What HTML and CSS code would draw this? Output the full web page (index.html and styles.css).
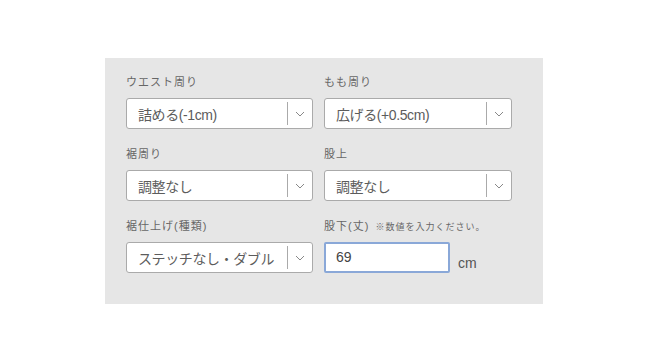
FILE: index.html
```html
<!DOCTYPE html>
<html lang="ja">
<head>
    <meta charset="UTF-8">
    <title>サイズ調整</title>
    <link rel="stylesheet" href="styles.css">
</head>
<body>
    <div class="panel">
        <div class="field">
            <label class="label">ウエスト周り</label>
            <div class="select">
                <span class="value">詰める(-1cm)</span>
                <span class="arrow"><svg width="10" height="6" viewBox="0 0 10 6"><path d="M1 1l4 4 4-4" fill="none" stroke="#888" stroke-width="1"/></svg></span>
            </div>
        </div>
        <div class="field">
            <label class="label">もも周り</label>
            <div class="select">
                <span class="value">広げる(+0.5cm)</span>
                <span class="arrow"><svg width="10" height="6" viewBox="0 0 10 6"><path d="M1 1l4 4 4-4" fill="none" stroke="#888" stroke-width="1"/></svg></span>
            </div>
        </div>
        <div class="field">
            <label class="label">裾周り</label>
            <div class="select">
                <span class="value">調整なし</span>
                <span class="arrow"><svg width="10" height="6" viewBox="0 0 10 6"><path d="M1 1l4 4 4-4" fill="none" stroke="#888" stroke-width="1"/></svg></span>
            </div>
        </div>
        <div class="field">
            <label class="label">股上</label>
            <div class="select">
                <span class="value">調整なし</span>
                <span class="arrow"><svg width="10" height="6" viewBox="0 0 10 6"><path d="M1 1l4 4 4-4" fill="none" stroke="#888" stroke-width="1"/></svg></span>
            </div>
        </div>
        <div class="field">
            <label class="label">裾仕上げ(種類)</label>
            <div class="select">
                <span class="value">ステッチなし・ダブル</span>
                <span class="arrow"><svg width="10" height="6" viewBox="0 0 10 6"><path d="M1 1l4 4 4-4" fill="none" stroke="#888" stroke-width="1"/></svg></span>
            </div>
        </div>
        <div class="field">
            <label class="label">股下(丈) <small class="note">※数値を入力ください。</small></label>
            <div class="inputRow">
                <div class="textInput">69</div>
                <span class="unit">cm</span>
            </div>
        </div>
    </div>
</body>
</html>
```

FILE: styles.css
```css
body {
    margin: 0;
    padding: 58px 0 0 105px;
    background: #ffffff;
    font-family: 'Liberation Sans', 'Noto Sans CJK JP', sans-serif;
    color: #555555;
}

.panel {
    width: 438px;
    box-sizing: border-box;
    background-color: #e6e6e6;
    padding: 15px 31px 31px 21px;
    display: grid;
    grid-template-columns: 187px 188px;
    column-gap: 11px;
    row-gap: 16px;
}

.label {
    display: block;
    height: 18px;
    line-height: 18px;
    font-size: 11px;
    letter-spacing: 1px;
    color: #666666;
    margin-bottom: 7px;
    white-space: nowrap;
}

.note {
    font-size: 9px;
    letter-spacing: 1px;
    margin-left: 2px;
}

.select {
    height: 31px;
    box-sizing: border-box;
    background: #ffffff;
    border: 1px solid #aaaaaa;
    border-radius: 3px;
    display: flex;
    align-items: center;
}

.value {
    flex: 1;
    padding-left: 11px;
    font-size: 14px;
    letter-spacing: -0.4px;
    color: #5c5c5c;
    white-space: nowrap;
    overflow: hidden;
}

.arrow {
    width: 24px;
    height: 23px;
    border-left: 1px solid #aaaaaa;
    display: flex;
    align-items: center;
    justify-content: center;
}

.inputRow {
    display: flex;
    align-items: flex-end;
}

.textInput {
    width: 126px;
    height: 31px;
    box-sizing: border-box;
    background: #ffffff;
    border: 2px solid #8aa8d8;
    border-radius: 2px;
    padding-left: 10px;
    line-height: 27px;
    font-size: 14px;
    color: #444444;
}

.unit {
    margin-left: 8px;
    margin-bottom: 2px;
    font-size: 14px;
    color: #555555;
    line-height: 16px;
}
```
